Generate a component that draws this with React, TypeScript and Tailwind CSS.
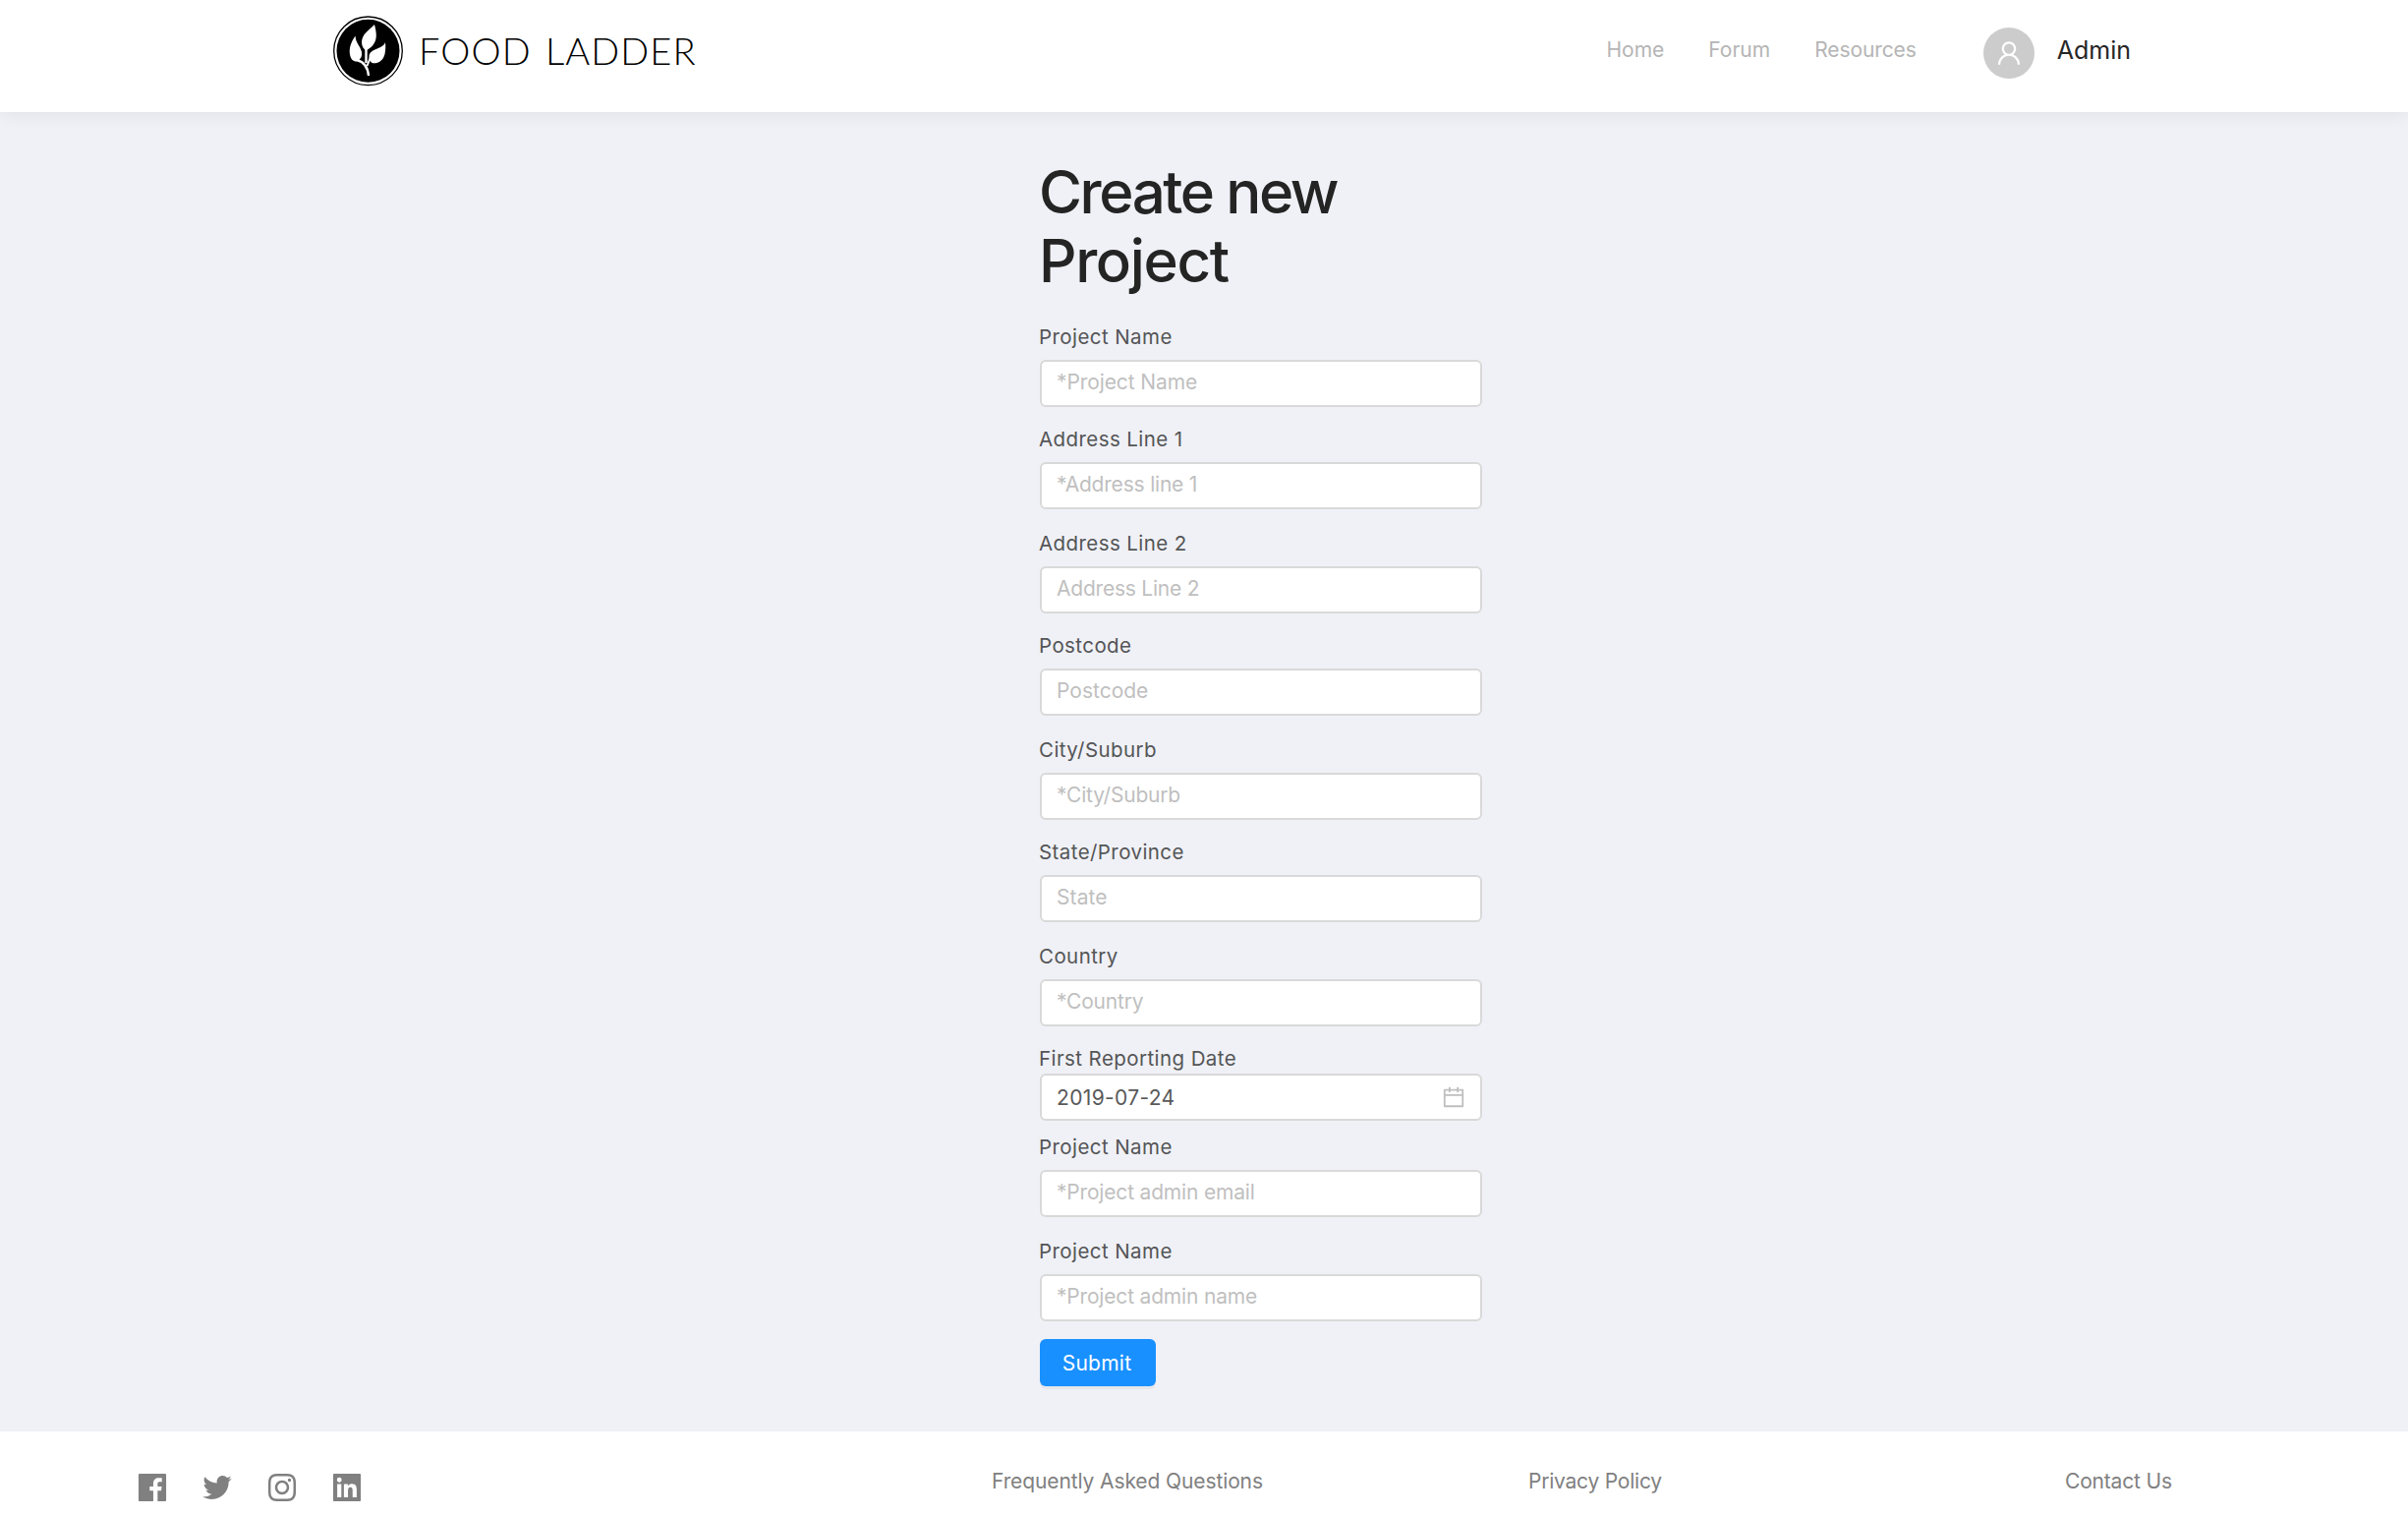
import React from 'react';
import { AiFillFacebook, AiFillLinkedin, AiOutlineCalendar, AiOutlineInstagram, AiOutlineTwitter, AiOutlineUser } from 'react-icons/ai';

type FieldProps = { label: string; placeholder: string; spacing: string; gap: string };

const fields: FieldProps[] = [
  { label: 'Project Name', placeholder: '*Project Name', spacing: 'tracking-[-0.1px]', gap: 'mb-5' },
  { label: 'Address Line 1', placeholder: '*Address line 1', spacing: 'tracking-[-0.2px]', gap: 'mb-[22px]' },
  { label: 'Address Line 2', placeholder: 'Address Line 2', spacing: 'tracking-[-0.22px]', gap: 'mb-5' },
  { label: 'Postcode', placeholder: 'Postcode', spacing: 'tracking-normal', gap: 'mb-[22px]' },
  { label: 'City/Suburb', placeholder: '*City/Suburb', spacing: 'tracking-[-0.2px]', gap: 'mb-5' },
  { label: 'State/Province', placeholder: 'State', spacing: 'tracking-[0.1px]', gap: 'mb-[22px]' },
  { label: 'Country', placeholder: '*Country', spacing: 'tracking-[-0.2px]', gap: 'mb-5' },
];

const adminFields: FieldProps[] = [
  { label: 'Project Name', placeholder: '*Project admin email', spacing: 'tracking-[-0.18px]', gap: 'mb-[22px]' },
  { label: 'Project Name', placeholder: '*Project admin name', spacing: 'tracking-[-0.18px]', gap: 'mb-[18px]' },
];

function Label({ children, tight = false }: { children: string; tight?: boolean }) {
  return (
    <label className={`-ml-px block text-[20.5px] leading-[26px] tracking-[0.42px] text-[#545557] ${tight ? 'h-7' : 'h-9'}`}>
      {children}
    </label>
  );
}

function Field({ label, placeholder, spacing, gap }: FieldProps) {
  return (
    <div className={gap}>
      <Label>{label}</Label>
      <input
        placeholder={placeholder}
        className={`block h-12 w-[450px] rounded-[6px] border-2 border-[#d9d9d9] bg-white px-[15px] pb-1 text-[21px] text-[#595959] outline-none placeholder:text-[#bfbfbf] ${spacing}`}
      />
    </div>
  );
}

function Logo() {
  return (
    <div className="flex items-center">
      <svg viewBox="0 0 72 72" className="h-[72px] w-[72px]">
        <circle cx="36.5" cy="35.8" r="34.8" fill="#fff" stroke="#000" strokeWidth="1.3" />
        <circle cx="36.5" cy="35.8" r="32" fill="#000" />
        <g fill="#fff">
          <path d="M43 9C37 15 30 19 30 27C30 31 32 34 34.500 35.500C41 32 44.800 27 44.800 20C44.800 16 44 13 43 9Z" />
          <path d="M23.500 20.500C19 27 17 33 18 39.500C18.800 44 21 46.500 25 46.500C29 44.500 31 41 29.800 36C28 30 24 28 23.500 20.500Z" />
          <path d="M54 27C52 34 38.500 33 37.500 41C37.200 45 39 47.500 41.500 48.300C48 48.500 52 45 53.500 39C54.300 35 54.500 31 54 27Z" />
        </g>
        <path d="M34.500 34V48M25 45C31 46.500 36 50 37 61" fill="none" stroke="#fff" strokeWidth="2.400" />
        <path d="M39 42L35.500 51" fill="none" stroke="#fff" strokeWidth="2" />
      </svg>
      <span className="-mt-0.5 ml-4 font-[Lato] text-[38px] leading-none font-light tracking-[1.1px] whitespace-nowrap text-black [word-spacing:3px]">FOOD LADDER</span>
    </div>
  );
}

export default function App() {
  return (
    <div className="flex h-[1542px] w-full flex-col bg-[#f0f1f6] font-[Inter,sans-serif]">
      <header className="flex h-[114px] shrink-0 bg-white pl-[338px] shadow-[0_4px_16px_rgba(0,0,0,0.06)]">
        <div className="mt-4 h-[72px]">
          <Logo />
        </div>
        <nav className="mt-[35px] mr-[68px] ml-auto flex h-8 gap-[45px] text-[21px] leading-8 text-[#b5b5b5]">
          <a>Home</a>
          <a>Forum</a>
          <a className="tracking-[-0.1px]">Resources</a>
        </nav>
        <div className="mt-7 mr-[282px] flex">
          <span className="flex h-[52px] w-[52px] items-center justify-center rounded-full bg-[#ccc] text-white">
            <AiOutlineUser size={30} />
          </span>
          <span className="ml-[23px] text-[25px] leading-[47px] text-[#262626]">Admin</span>
        </div>
      </header>

      <main className="ml-[1058px] w-[450px] pt-[46px]">
        <h1 className="-ml-px text-[60px] leading-[70px] font-medium text-[#242424]">
          <span className="block tracking-[-2.4px]">Create new</span>
          <span className="block tracking-[-1.35px]">Project</span>
        </h1>
        <form className="mt-[30px]">
          {fields.map((f) => (
            <Field key={f.label} {...f} />
          ))}
          <div className="mb-3.5">
            <Label tight>First Reporting Date</Label>
            <div className="flex h-12 w-[450px] items-center rounded-[6px] border-2 border-[#d9d9d9] bg-white pr-3.5 pl-[15px] text-[#595959]">
              <span className="pt-0.5 text-[21px] tracking-[0.35px]">2019-07-24</span>
              <AiOutlineCalendar size={26} className="ml-auto text-[#bfbfbf]" />
            </div>
          </div>
          {adminFields.map((f) => (
            <Field key={f.placeholder} {...f} />
          ))}
          <button type="button" className="h-12 w-[118px] rounded-[6px] bg-[#1890ff] pt-0.5 pr-0.5 text-[21px] tracking-[0.25px] text-white shadow-[0_3px_0_rgba(0,0,0,0.04)]">Submit</button>
        </form>
      </main>

      <footer className="mt-auto flex h-[86px] shrink-0 bg-white pl-[137px] text-[21px] leading-8 text-[#808080]">
        <div className="mt-[39px] flex w-[872px] gap-[30px]">
          <AiFillFacebook size={36} />
          <AiOutlineTwitter size={36} />
          <AiOutlineInstagram size={36} />
          <AiFillLinkedin size={36} />
        </div>
        <a className="mt-[35px] w-[546px] tracking-[-0.11px]">Frequently Asked Questions</a>
        <a className="mt-[35px] w-[546px] tracking-[-0.22px]">Privacy Policy</a>
        <a className="mt-[35px] tracking-[-0.18px]">Contact Us</a>
      </footer>
    </div>
  );
}
